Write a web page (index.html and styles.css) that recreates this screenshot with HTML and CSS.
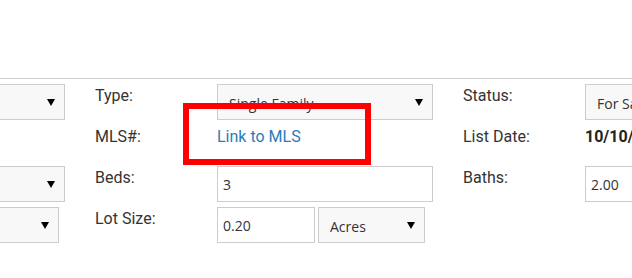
FILE: index.html
```html
<!DOCTYPE html>
<html>
<head>
	<meta charset="utf-8">
	<title>Listing Details</title>
	<link rel="stylesheet" href="styles.css">
</head>
<body>

<div class="details">
	<div class="row">
		<div class="cell">
			<label class="label"></label>
			<div class="field select"><span class="select-text"></span><span class="caret"></span></div>
		</div>
		<div class="cell">
			<label class="label">Type:</label>
			<div class="field select"><span class="select-text">Single Family</span><span class="caret"></span></div>
		</div>
		<div class="cell">
			<label class="label">Status:</label>
			<div class="field select"><span class="select-text">For Sale</span><span class="caret"></span></div>
		</div>
	</div>
	<div class="row">
		<div class="cell">
			<label class="label"></label>
			<div class="field"></div>
		</div>
		<div class="cell">
			<label class="label">MLS#:</label>
			<div class="field"><a class="link" href="#">Link to MLS</a></div>
		</div>
		<div class="cell">
			<label class="label">List Date:</label>
			<div class="field"><span class="value">10/10/2017</span></div>
		</div>
	</div>
	<div class="row">
		<div class="cell">
			<label class="label"></label>
			<div class="field select"><span class="select-text"></span><span class="caret"></span></div>
		</div>
		<div class="cell">
			<label class="label">Beds:</label>
			<input class="field input" type="text" value="3">
		</div>
		<div class="cell">
			<label class="label">Baths:</label>
			<input class="field input" type="text" value="2.00">
		</div>
	</div>
	<div class="row">
		<div class="cell">
			<label class="label"></label>
			<div class="field select select-short"><span class="select-text"></span><span class="caret"></span></div>
		</div>
		<div class="cell">
			<label class="label">Lot Size:</label>
			<div class="field split">
				<input class="input input-lot" type="text" value="0.20">
				<div class="select select-unit"><span class="select-text">Acres</span><span class="caret"></span></div>
			</div>
		</div>
		<div class="cell">
		</div>
	</div>
</div>

<div class="highlight"></div>

</body>
</html>
```

FILE: styles.css
```css
html, body {
	margin: 0;
	overflow: hidden;
	background: #fff;
}

body {
	font-family: Roboto, sans-serif;
	font-size: 16px;
	color: #333;
}

.details {
	margin-top: 78px;
	border-top: 1px solid #cfcfcf;
	padding-top: 5px;
	margin-left: -273px;
	width: 1200px;
}

.row {
	display: flex;
	height: 36px;
	margin-bottom: 5px;
}

.cell {
	display: flex;
	width: 338px;
	margin-right: 30px;
	flex-shrink: 0;
}

.label {
	width: 122px;
	flex-shrink: 0;
	line-height: 24px;
}

.field {
	width: 216px;
	height: 36px;
	box-sizing: border-box;
	flex-shrink: 0;
}

.select {
	display: flex;
	align-items: center;
	justify-content: space-between;
	border: 1px solid #cccccc;
	background: #f8f8f8;
	padding: 2px 9px 0 11px;
	box-sizing: border-box;
	height: 36px;
	font-family: "Open Sans", sans-serif;
	font-size: 14px;
	color: #333;
}

.select-short {
	width: 210px;
}

.caret {
	width: 0;
	height: 0;
	border-left: 4.5px solid transparent;
	border-right: 4.5px solid transparent;
	border-top: 7px solid #000;
	margin-top: -2px;
}

.input {
	border: 1px solid #cccccc;
	background: #fff;
	padding: 0 5px;
	font-family: "Open Sans", sans-serif;
	font-size: 14px;
	color: #333;
	outline: 0;
	border-radius: 0;
	margin: 0;
}

.split {
	display: flex;
	gap: 3px;
}

.input-lot {
	width: 98px;
	height: 36px;
	box-sizing: border-box;
}

.select-unit {
	width: 107px;
}

.link {
	color: #2b7bb9;
	text-decoration: none;
	line-height: 24px;
}

.value {
	font-weight: bold;
	color: #222;
	line-height: 24px;
}

.highlight {
	position: absolute;
	left: 183px;
	top: 103px;
	width: 188px;
	height: 62px;
	box-sizing: border-box;
	border: 6px solid #ff0000;
}
```
